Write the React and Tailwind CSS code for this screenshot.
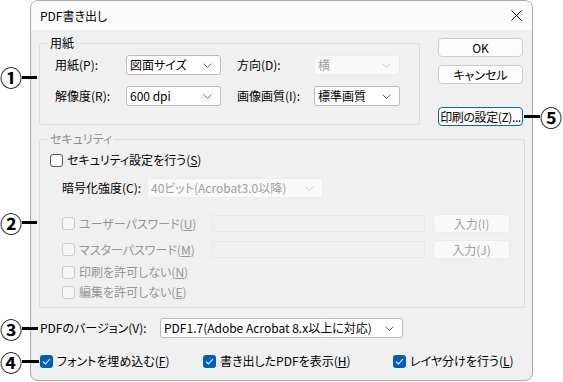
import React from 'react'

const font = "font-['Noto_Sans_CJK_JP',sans-serif] [font-feature-settings:'palt']"

function Chevron({ disabled }) {
  return (
    <svg width="9" height="5" viewBox="0 0 9 5" className="shrink-0">
      <path d="M0.5 0.5 L4.5 4.5 L8.5 0.5" fill="none" stroke={disabled ? '#cfcfcf' : '#6b6b6b'} strokeWidth="1" />
    </svg>
  )
}

function Select({ value, className = '', disabled }) {
  return (
    <div
      className={`h-[20px] flex items-center justify-between pl-[3px] pr-[8px] border rounded-[3px] ${
        disabled ? 'bg-[#f9f9f9] border-[#ececec] text-[#a0a0a0]' : 'bg-white border-[#bdbdbd] text-black'
      } ${className}`}
    >
      <span className="whitespace-nowrap">{value}</span>
      <Chevron disabled={disabled} />
    </div>
  )
}

function Check({ checked, disabled }) {
  if (checked) {
    return (
      <span className="w-[13px] h-[13px] rounded-[3px] bg-[#005fb8] flex items-center justify-center shrink-0">
        <svg width="9" height="7" viewBox="0 0 9 7">
          <path d="M1 3.6 L3.4 6 L8 1" fill="none" stroke="#fff" strokeWidth="1.1" />
        </svg>
      </span>
    )
  }
  return (
    <span
      className={`w-[13px] h-[13px] rounded-[3px] border shrink-0 ${
        disabled ? 'border-[#cbcbcb] bg-[#f6f6f6]' : 'border-[#555] bg-[#fbfbfb]'
      }`}
    />
  )
}

function CheckRow({ checked, disabled, label, mn, className = '' }) {
  return (
    <div className={`flex items-center h-[16px] gap-[4px] ${disabled ? 'text-[#959595]' : 'text-black'} ${className}`}>
      <Check checked={checked} disabled={disabled} />
      <span className="whitespace-nowrap">
        {label}(<span className="underline">{mn}</span>)
      </span>
    </div>
  )
}

function Btn({ children, focus, disabled, className = '' }) {
  return (
    <div
      className={`h-[19px] flex items-center justify-center rounded-[4px] border whitespace-nowrap ${
        focus
          ? 'border-[#0067c0] bg-[#fdfdfd] text-black'
          : disabled
          ? 'border-[#ececec] bg-[#f9f9f9] text-[#a0a0a0]'
          : 'border-[#cccccc] bg-[#fdfdfd] text-black'
      } ${className}`}
    >
      {children}
    </div>
  )
}

function Marker({ n, className }) {
  return (
    <div className={`absolute flex items-center ${className}`}>
      <span className="text-[22px] leading-none font-bold text-black">{n}</span>
    </div>
  )
}

export default function App() {
  return (
    <div className={`relative w-[563px] h-[382px] bg-white text-[12px] leading-[16px] ${font}`}>
      {/* dialog */}
      <div className="ml-[30px] w-[503px] h-[381px] border border-[#a8a8a8] rounded-[8px] overflow-hidden bg-[#f0f0f0] flex flex-col">
        <div className="h-[29px] bg-[#fbfbfb] flex items-center justify-between pl-[9px] pr-[10px]">
          <span>PDF書き出し</span>
          <svg width="11" height="11" viewBox="0 0 11 11">
            <path d="M0.5 0.5 L10.5 10.5 M10.5 0.5 L0.5 10.5" stroke="#1a1a1a" strokeWidth="1" />
          </svg>
        </div>

        <div className="px-[8px] flex flex-col">
          {/* paper + buttons */}
          <div className="flex items-start">
            <div className="relative mt-[13px] w-[381px] h-[82px] border border-[#dcdcdc] rounded-[2px] pt-[11px] pl-[15px]">
              <span className="absolute -top-[9px] left-[8px] px-[2px] bg-[#f0f0f0]">用紙</span>
              <div className="flex items-center">
                <span className="w-[71px]">用紙(P):</span>
                <Select value="図面サイズ" className="w-[95px]" />
                <span className="ml-[16px] w-[77px]">方向(D):</span>
                <Select value="横" disabled className="w-[86px]" />
              </div>
              <div className="flex items-center mt-[11px]">
                <span className="w-[71px]">解像度(R):</span>
                <Select value="600 dpi" className="w-[95px]" />
                <span className="ml-[16px] w-[77px]">画像画質(I):</span>
                <Select value="標準画質" className="w-[86px]" />
              </div>
            </div>
            <div className="ml-[18px] mt-[8px] w-[85px] flex flex-col">
              <Btn>OK</Btn>
              <Btn className="mt-[8px]">キャンセル</Btn>
              <Btn focus className="mt-[23px] tracking-[-0.4px]">印刷の設定(Z)...</Btn>
            </div>
          </div>

          {/* security */}
          <div className="relative mt-[13px] w-[486px] h-[169px] border border-[#dcdcdc] rounded-[2px] pt-[12px]">
            <span className="absolute -top-[9px] left-[8px] px-[2px] bg-[#f0f0f0] text-[#8f8f8f]">セキュリティ</span>
            <CheckRow label="セキュリティ設定を行う" mn="S" className="ml-[10px]" />
            <div className="flex items-center mt-[10px] ml-[22px]">
              <span className="w-[85px]">暗号化強度(C):</span>
              <Select value="40ビット(Acrobat3.0以降)" disabled className="w-[176px]" />
            </div>
            <div className="flex items-center mt-[17px] ml-[22px] h-[17px]">
              <CheckRow disabled label="ユーザーパスワード" mn="U" className="w-[150px]" />
              <div className="w-[213px] h-[17px] border border-[#e8e8e8] bg-[#f0f0f0]" />
              <Btn disabled className="ml-[8px] w-[77px] h-[18px]">入力(I)</Btn>
            </div>
            <div className="flex items-center mt-[9px] ml-[22px] h-[17px]">
              <CheckRow disabled label="マスターパスワード" mn="M" className="w-[150px]" />
              <div className="w-[213px] h-[17px] border border-[#e8e8e8] bg-[#f0f0f0]" />
              <Btn disabled className="ml-[8px] w-[77px] h-[18px]">入力(J)</Btn>
            </div>
            <CheckRow disabled label="印刷を許可しない" mn="N" className="ml-[22px] mt-[6px]" />
            <CheckRow disabled label="編集を許可しない" mn="E" className="ml-[22px] mt-[4px]" />
          </div>

          {/* version */}
          <div className="flex items-center mt-[10px] ml-[1px]">
            <span className="w-[120px]">PDFのバージョン(V):</span>
            <Select value="PDF1.7(Adobe Acrobat 8.x以上に対応)" className="w-[243px]" />
          </div>

          {/* options */}
          <div className="flex items-center mt-[15px] ml-[1px]">
            <CheckRow checked label="フォントを埋め込む" mn="F" className="w-[163px]" />
            <CheckRow checked label="書き出したPDFを表示" mn="H" className="w-[190px]" />
            <CheckRow checked label="レイヤ分けを行う" mn="L" />
          </div>
        </div>
      </div>

      {/* callouts */}
      <Marker n="①" className="left-0 top-[65px]" />
      <div className="absolute left-[22px] top-[76px] w-[15px] h-[3px] bg-black" />
      <Marker n="②" className="left-0 top-[211px]" />
      <div className="absolute left-[22px] top-[221px] w-[15px] h-[3px] bg-black" />
      <Marker n="③" className="left-0 top-[317px]" />
      <div className="absolute left-[22px] top-[327px] w-[16px] h-[3px] bg-black" />
      <Marker n="④" className="left-0 top-[350px]" />
      <div className="absolute left-[22px] top-[360px] w-[17px] h-[3px] bg-black" />
      <div className="absolute left-[524px] top-[115px] w-[16px] h-[3px] bg-black" />
      <Marker n="⑤" className="left-[540px] top-[105px]" />
    </div>
  )
}
